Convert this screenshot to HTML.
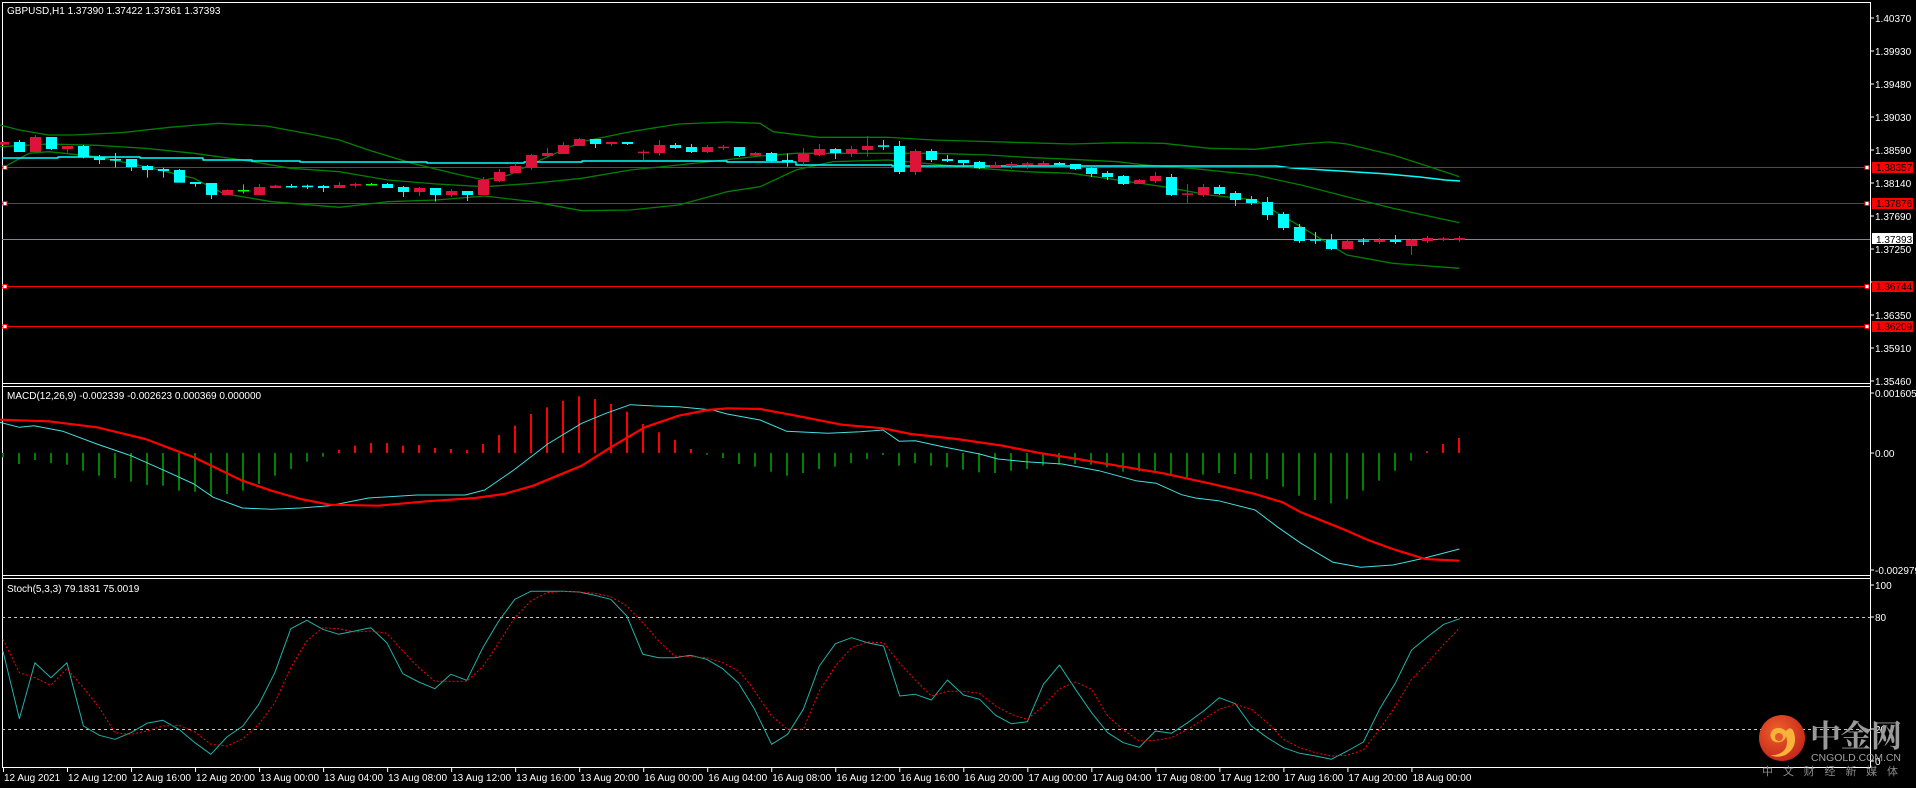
<!DOCTYPE html>
<html><head><meta charset="utf-8">
<style>
html,body{margin:0;padding:0;background:#000;width:1916px;height:788px;overflow:hidden}
svg{display:block}
text{font-family:"Liberation Sans","DejaVu Sans",sans-serif;}
</style></head>
<body>
<svg id="s" width="1916" height="788" xmlns="http://www.w3.org/2000/svg">
<rect width="1916" height="788" fill="#000"/>
<g id="g"></g>
<!-- labels -->
<g fill="#fff" font-size="10">
<text x="7" y="14">GBPUSD,H1  1.37390 1.37422 1.37361 1.37393</text>
<text x="7" y="399">MACD(12,26,9) -0.002339 -0.002623 0.000369 0.000000</text>
<text x="7" y="592">Stoch(5,3,3) 79.1831 75.0019</text>
</g>
<!-- watermark -->
<defs><radialGradient id="lg" cx="0.4" cy="0.35" r="0.7"><stop offset="0" stop-color="#f0602a"/><stop offset="1" stop-color="#c1251a"/></radialGradient></defs>
<circle cx="1782" cy="738" r="23" fill="url(#lg)"/>
<path d="M1786 731 C1778 724 1768 730 1771 738 C1774 745 1785 743 1786 736 C1790 748 1782 756 1770 755 C1784 761 1796 750 1795 738 C1794 728 1790 726 1786 731 Z" fill="#f6b43a"/>
<circle cx="1779" cy="737" r="4" fill="#e8552a"/>
<text x="1810" y="747" font-size="31" font-weight="bold" fill="#9a9a9a" style="font-family:'Noto Serif CJK SC','Noto Sans CJK SC',serif" textLength="92">中金网</text>
<text x="1811" y="761" font-size="10.5" fill="#a0a0a0" textLength="90">CNGOLD.COM.CN</text>
<text x="1762" y="775" font-size="11" fill="#8a8a8a" style="font-family:'Noto Sans CJK SC',sans-serif" textLength="136">中 文 财 经 新 媒 体</text>
</svg>
<script>
var NS="http://www.w3.org/2000/svg",G=document.getElementById('g');
function el(t,a){var e=document.createElementNS(NS,t);for(var k in a)e.setAttribute(k,a[k]);G.appendChild(e);return e;}
function line(x1,y1,x2,y2,c,w,extra){var a={x1:x1,y1:y1,x2:x2,y2:y2,stroke:c,'stroke-width':w||1};if(extra)for(var k in extra)a[k]=extra[k];return el('line',a);}
function txt(x,y,s,c,sz){var e=el('text',{x:x,y:y,fill:c||'#fff','font-size':sz||10});e.textContent=s;return e;}
function A(x){return x/2.063;}function B(x){return 750+x/2.178;}
function poly(pts,c,w,extra){var a={points:pts.map(function(p){return p[0].toFixed(1)+','+p[1].toFixed(1)}).join(' '),fill:'none',stroke:c,'stroke-width':w||1,'stroke-linejoin':'round'};if(extra)for(var k in extra)a[k]=extra[k];return el('polyline',a);}
function conv(a,b,off){var r=[];a.forEach(function(p){r.push([A(p[0]),off+p[1]/3]);});b.forEach(function(p){r.push([B(p[0]),off+p[1]/3]);});return r;}

// frames
var R=1870;
line(2,2.5,R,2.5,'#fff');line(2,383.5,R,383.5,'#fff');
line(2,386.5,R,386.5,'#fff');line(2,575.5,R,575.5,'#fff');
line(2,578.5,R,578.5,'#fff');line(2,767.5,R,767.5,'#fff');
line(2.5,2,2.5,768,'#fff');line(R+.5,2,R+.5,768,'#fff');

// main price axis
var pl=[['1.40370',18],['1.39930',51],['1.39480',84],['1.39030',117],['1.38590',150],['1.38140',183],['1.37690',216],['1.37250',249],['1.36800',282],['1.36350',315],['1.35910',348],['1.35460',381]];
pl.forEach(function(p){line(R,p[1],R+4,p[1],'#fff');if(p[0]!='1.36800')txt(1875,p[1]+4,p[0]);});

// bollinger bands
var up=conv([[0,15],[40,30],[100,45],[150,45],[250,38],[350,22],[450,10],[550,18],[650,45],[700,60],[760,90],[850,130],[950,165],[1000,180],[1050,165],[1100,130],[1200,65],[1300,35],[1400,12],[1500,6],[1568,10]],
 [[50,35],[150,52],[300,52],[400,60],[600,68],[700,72],[800,68],[900,70],[1000,85],[1100,88],[1200,72],[1260,66],[1300,72],[1400,105],[1480,140],[1545,170]],120);
var mid=conv([[0,80],[100,72],[200,76],[300,85],[400,100],[500,120],[600,145],[700,155],[800,180],[900,192],[1000,200],[1100,190],[1200,175],[1300,150],[1400,135],[1568,108]],
 [[100,100],[200,100],[400,100],[520,105],[600,112],[700,118],[800,125],[860,135],[960,145],[1100,165],[1200,195],[1300,230],[1400,265],[1545,308]],120);
var lo=conv([[10,140],[60,100],[100,95],[200,110],[300,140],[400,175],[460,220],[560,245],[700,262],[800,245],[900,240],[1000,228],[1100,245],[1200,272],[1300,270],[1400,255],[1500,215],[1568,200]],
 [[100,150],[130,140],[180,125],[300,120],[500,145],[600,155],[700,160],[800,180],[900,200],[1000,225],[1100,240],[1200,320],[1300,405],[1400,430],[1545,445]],120);
poly(up,'#008000',1.3);poly(mid,'#008000',1.3);poly(lo,'#008000',1.3);
// cyan MA stepped
var ma=[[2,158],[58,158],[58,157],[140,157],[140,158],[203,158],[203,160],[252,160],[252,161],[300,161],[300,162],[427,162],[427,163],[524,163],[524,162],[582,162],[582,161],[727,161],[727,162],[796,162],[796,165],[892,165],[892,166],[1276,166],[1292,168],[1324,170],[1356,172],[1388,174],[1420,177],[1445,180],[1460,181]];
poly(ma,'#00ffff',1.5);

// horizontal lines
line(2,239.5,R,239.5,'#778899');
[[167,'1.38357'],[203,'1.37876'],[286,'1.36744'],[326,'1.36209']].forEach(function(h){
 line(2,h[0]+.5,R,h[0]+.5,'#ff0000');
 el('rect',{x:3,y:h[0]-1.5,width:4,height:4,fill:'#fff',stroke:'#ff0000','stroke-width':1});
 el('rect',{x:1865,y:h[0]-1.5,width:4,height:4,fill:'#fff',stroke:'#ff0000','stroke-width':1});
 el('rect',{x:1872,y:h[0]-5,width:41,height:11,fill:'#ff0000'});
 txt(1876,h[0]+4,h[1],'#000');
});
el('rect',{x:1872,y:233,width:41,height:11,fill:'#fff'});
txt(1876,243,'1.37393','#000');

// candles
var C=[['d',66,74],['u',66,96,60,96],['d',51,96,45,100],['u',51,87,51,90],['d',78,87,78,98],['u',78,112],['u',112,120,105,132],['u',117,122,99,143],['u',117,141,117,153],['u',138,150,135,173],
['u',147,153,143,173],['u',150,188,147,188],['u',186,192,186,200],['u',189,225,189,237],['d',210,225,208,225],['g',210,213,193,220],['d',201,225,192,225],['d',197,204,195,204],['u',198,201,192,204],['u',197,201,194,207],
['u',198,204,195,216],['d',195,204,186,204],['d',192,197,188,203],['g',192,195,189,197],['u',192,204,189,204],['u',201,216,198,231],['d',204,216,201,228],['u',204,225,204,245],['d',213,225,207,231],['u',213,225,213,243],
['d',180,225,171,225],['d',156,183,147,186],['d',138,159,129,159],['d',105,143,102,150],['d',99,108,84,110],['d',75,102,66,102],['d',57,78,54,78],['u',57,72,57,84],['d',66,72,66,78],['u',66,72,66,75],
['d',95,98,90,122],['d',75,99,60,107],['u',75,84,69,87],['u',81,96,72,99],['d',81,96,75,99],['d',80,83,75,90],['u',81,108,81,111],['d',99,107,96,108],
['u',99,123],['u',120,126,100,140],['d',102,126,84,135],['d',87,105,72,108],['u',87,99,84,117],['d',87,99,78,111],['d',78,90,48,110],['u',76,79,60,90],['u',78,156,63,162],['d',93,156,87,165],
['u',93,120,87,126],['u',117,123,105,126],['u',120,129,120,138],['u',126,144],['d',135,144,126,144],['d',132,138,126,147],['d',130,133,126,147],['d',129,135,123,135],['u',129,135,126,138],['u',132,147,132,150],
['u',144,162,141,171],['u',159,171,153,180],['u',168,192],['d',180,192,177,192],['d',168,183,156,189],['u',171,225,162,228],['d',220,223,192,249],['d',201,225,192,231],['u',201,222,195,225],['u',219,240,213,258],
['u',237,249,228,255],['u',246,285,231,300],['u',282,324,276,330],['u',321,363,312,369],['u',358,361,336,372],['u',360,387,342,390],['d',363,387,360,387],['u',361,364,354,375],['d',360,366,354,372],['u',360,366,345,372],
['d',360,378,357,405],['d',354,363,348,369],['d',355,358,351,363],['d',354,360,348,366]];
var col={u:'#00ffff',d:'#dc143c',g:'#00ff00'};
C.forEach(function(c,i){
 var x=3.4+16*i,cl=col[c[0]],t=120+c[1]/3,b=120+c[2]/3,wt=120+(c[3]!=null?c[3]:c[1]-3)/3,wb=120+(c[4]!=null?c[4]:c[2]+3)/3;
 line(Math.round(x)+.5,wt,Math.round(x)+.5,wb,cl,1);
 var h=Math.max(b-t,1.5);
 el('rect',{x:Math.round(x)-5,y:t,width:11,height:h,fill:cl});
});

// MACD axis
[['0.001605',393],['0.00',453],['-0.002979',570]].forEach(function(p){line(R,p[1],R+4,p[1],'#fff');txt(1875,p[1]+4,p[0]);});
// MACD histogram
var H6=[220,240,228,237,242,260,275,282,293,303,305,320,323,335,330,320,300,275,255,233,218,197,185,177,177,185,183,192,195,198,180,153,125,90,70,50,37,45,60,83,120,145,168,195,212,222,240,248];
var H7=[263,275,267,255,248,237,225,213,245,237,245,250,257,265,267,260,255,245,242,240,242,250,263,262,260,275,280,272,267,270,285,285,308,335,348,358,345,320,290,260,230,202,180,162];
var H=H6.concat(H7);
H.forEach(function(v,i){var x=3.4+16*i,y=384+v/3,z=453;var c=v<207?'#ff0000':'#008000';
 el('rect',{x:Math.round(x)-1,y:Math.min(y,z),width:2,height:Math.max(Math.abs(y-z),1),fill:c});});
// MACD lines
var mc=conv([[0,115],[40,130],[70,125],[130,142],[200,180],[270,215],[340,260],[400,300],[440,340],[500,372],[560,376],[620,372],[680,365],[760,342],[860,333],[960,333],[1000,318],[1060,258],[1130,180],[1200,118],[1250,88],[1300,62],[1350,66],[1400,68],[1470,78],[1500,90],[1568,108]],
 [[80,142],[170,148],[240,143],[290,138],[325,172],[360,170],[420,188],[500,210],[540,225],[600,233],[680,240],[760,260],[840,290],[885,298],[940,332],[970,342],[1020,350],[1100,378],[1150,430],[1200,478],[1270,535],[1330,550],[1400,543],[1470,522],[1545,495]],384);
var ms=conv([[0,107],[100,112],[200,130],[300,165],[400,220],[450,255],[500,290],[560,320],[620,345],[680,362],[780,365],[880,352],[980,342],[1040,330],[1100,305],[1200,245],[1260,190],[1330,130],[1400,95],[1460,78],[1500,73],[1568,75]],
 [[100,95],[200,122],[290,133],[350,150],[450,165],[550,185],[630,207],[700,222],[800,245],[900,268],[1000,298],[1100,330],[1160,355],[1200,385],[1300,440],[1350,470],[1400,495],[1470,525],[1545,530]],384);
poly(mc,'#40e0e0',1);poly(ms,'#ff0000',2.2);

// Stoch
[['100',585],['80',617],['20',729],['0',761]].forEach(function(p){line(R,p[1],R+4,p[1],'#fff');txt(1875,p[1]+4,p[0]);});
line(2,617.5,R,617.5,'#c8c8c8',1,{'stroke-dasharray':'3,3'});
line(2,729.5,R,729.5,'#c8c8c8',1,{'stroke-dasharray':'3,3'});
var sm=conv([[6,225],[40,428],[72,260],[105,305],[138,260],[172,450],[205,478],[237,490],[270,470],[303,442],[336,433],[369,460],[402,500],[435,535],[468,483],[501,450],[534,385],[567,290],[600,158],[633,133],[666,160],[699,175],[732,165],[765,155],[798,200],[831,293],[864,318],[897,338],[930,295],[963,313],[996,215],[1029,135],[1062,70],[1095,46],[1128,46],[1161,46],[1194,48],[1227,58],[1260,70],[1293,120],[1326,235],[1359,245],[1392,245],[1425,238],[1458,250],[1491,278],[1524,322]],
 [[10,400],[47,505],[82,475],[116,400],[151,270],[186,203],[221,185],[256,200],[291,210],[326,360],[360,355],[395,372],[430,312],[465,357],[500,370],[535,418],[569,443],[604,437],[639,325],[674,267],[709,340],[744,410],[779,470],[813,500],[848,514],[883,465],[918,472],[953,440],[988,405],[1022,365],[1057,383],[1092,450],[1127,485],[1162,515],[1197,532],[1232,540],[1266,550],[1301,525],[1336,498],[1371,400],[1406,320],[1441,222],[1476,182],[1511,145],[1546,128]],576);
var ss=conv([[6,190],[40,290],[72,305],[105,328],[138,278],[172,335],[205,395],[237,470],[270,475],[303,465],[336,450],[369,448],[402,468],[435,505],[468,510],[501,488],[534,445],[567,380],[600,275],[633,195],[666,155],[699,158],[732,168],[765,165],[798,172],[831,225],[864,275],[897,316],[930,316],[963,316],[996,272],[1029,200],[1062,125],[1095,75],[1128,50],[1161,46],[1194,48],[1227,52],[1260,62],[1293,90],[1326,140],[1359,195],[1392,240],[1425,242],[1458,245],[1491,260],[1524,285]],
 [[0,325],[47,420],[82,460],[116,460],[151,345],[186,270],[221,215],[256,198],[291,200],[326,262],[360,312],[395,360],[430,346],[465,346],[500,352],[535,390],[569,415],[604,430],[639,390],[674,338],[709,318],[744,340],[779,420],[813,462],[848,495],[883,493],[918,485],[953,460],[988,430],[1022,400],[1057,385],[1092,400],[1127,440],[1162,490],[1197,515],[1232,530],[1266,540],[1301,538],[1336,522],[1371,460],[1406,390],[1441,310],[1476,260],[1511,205],[1546,155]],576);
poly(sm,'#20b2aa',1);poly(ss,'#ff0000',1,{'stroke-dasharray':'2,2'});

// time axis
var TL=['12 Aug 2021','12 Aug 12:00','12 Aug 16:00','12 Aug 20:00','13 Aug 00:00','13 Aug 04:00','13 Aug 08:00','13 Aug 12:00','13 Aug 16:00','13 Aug 20:00','16 Aug 00:00','16 Aug 04:00','16 Aug 08:00','16 Aug 12:00','16 Aug 16:00','16 Aug 20:00','17 Aug 00:00','17 Aug 04:00','17 Aug 08:00','17 Aug 12:00','17 Aug 16:00','17 Aug 20:00','18 Aug 00:00'];
TL.forEach(function(s,k){var x=3+64.02*k;line(x+.5,768,x+.5,772,'#fff');txt(x+1,781,s);});
</script>
</body></html>
